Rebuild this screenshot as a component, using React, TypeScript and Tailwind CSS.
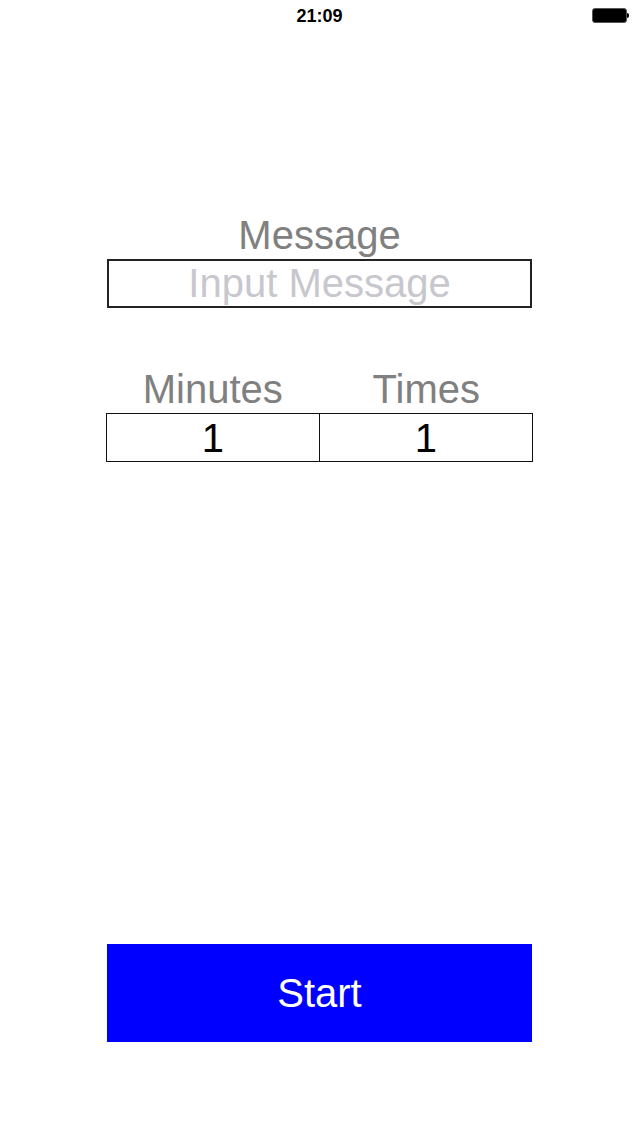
import React from "react";

const font = { fontFamily: '"Liberation Sans", Arial, sans-serif' };

function StatusBar() {
  return (
    <div className="relative h-[32px] w-full">
      <div className="absolute left-0 right-0 top-[5px] text-center text-[18px] font-semibold leading-[22px] text-black">
        21:09
      </div>
      {/* battery */}
      <div className="absolute left-[592px] top-[8px] flex items-center">
        <div className="h-[15px] w-[35px] rounded-[3px] border border-[#555] bg-black" />
        <div className="h-[5px] w-[2px] rounded-r-sm bg-black" />
      </div>
    </div>
  );
}

export default function App() {
  return (
    <div className="min-h-[1136px] w-[639px] bg-white" style={font}>
      <StatusBar />
      <div className="flex flex-col items-center">
        <div className="mt-[180px] w-[425px] text-center text-[40px] leading-[47px] text-[#808080]">
          Message
        </div>
        <div className="flex h-[49px] w-[425px] items-center justify-center border-2 border-[#222]">
          <input
            className="w-full bg-transparent text-center text-[40px] leading-[45px] text-black outline-none placeholder:text-[#c7c7cd]"
            style={font}
            placeholder="Input Message"
          />
        </div>

        <div className="mt-[58px] grid w-[427px] grid-cols-2">
          <div className="text-center text-[40px] leading-[47px] text-[#808080]">Minutes</div>
          <div className="text-center text-[40px] leading-[47px] text-[#808080]">Times</div>
        </div>
        <div className="grid h-[49px] w-[427px] grid-cols-2 overflow-hidden border-[1.5px] border-[#111]">
          <div className="flex items-center justify-center border-r-[1.5px] border-[#111] text-[40px] leading-none text-black">
            1
          </div>
          <div className="flex items-center justify-center text-[40px] leading-none text-black">1</div>
        </div>

        <button className="mt-[482px] flex h-[98px] w-[425px] items-center justify-center bg-[#0000ff] text-[40px] leading-none text-white">
          Start
        </button>
      </div>
    </div>
  );
}
